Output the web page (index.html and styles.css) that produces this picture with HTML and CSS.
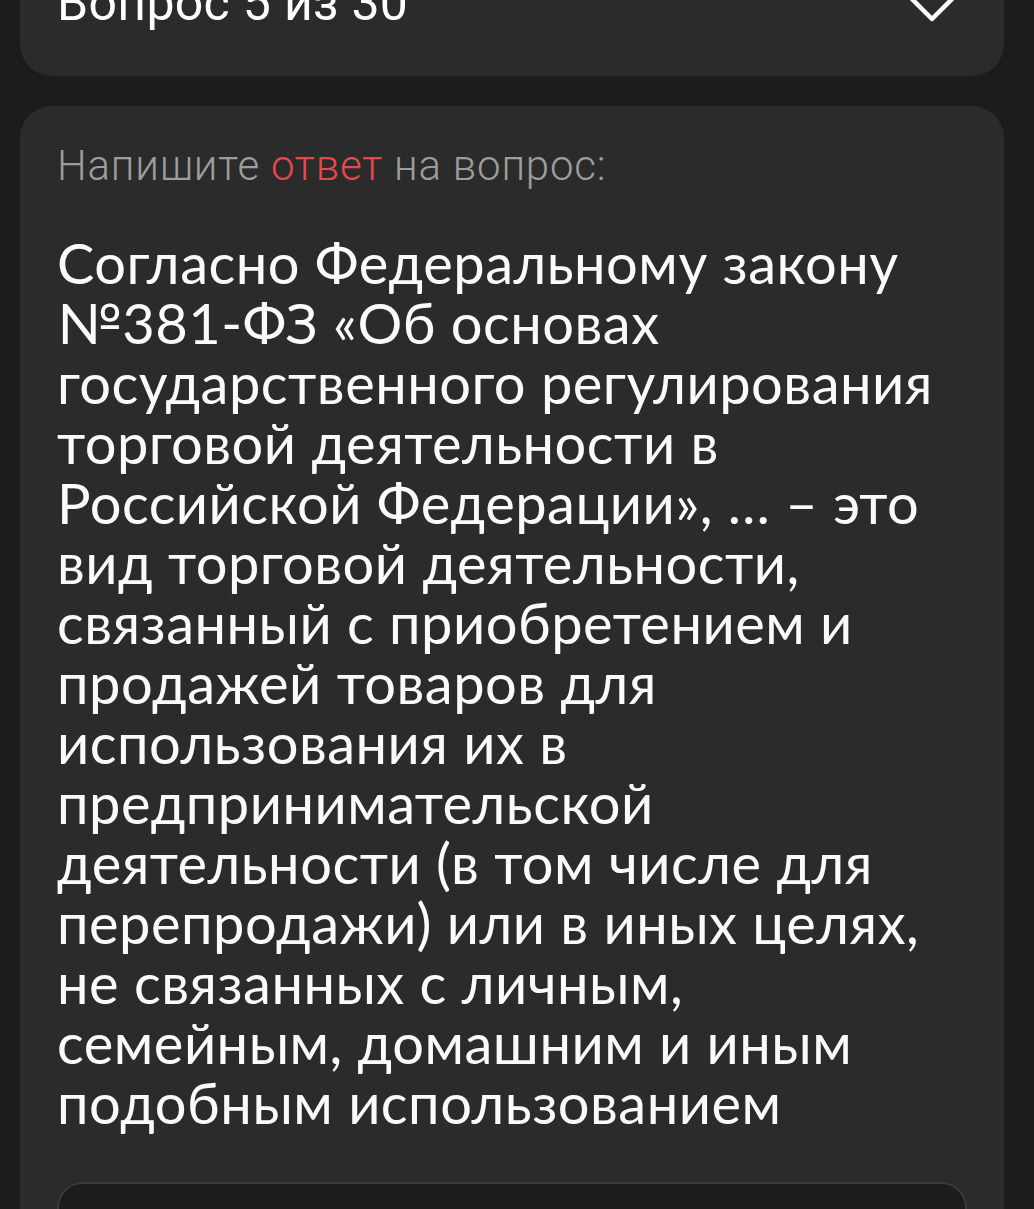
FILE: index.html
```html
<!DOCTYPE html>
<html lang="ru">
<head>
    <meta charset="UTF-8">
    <meta name="viewport" content="width=device-width, initial-scale=1.0">
    <title>Вопрос 5 из 30</title>
    <link rel="stylesheet" href="styles.css">
</head>
<body>
<div class="stranitsa">
    <!-- Шапка с номером вопроса -->
    <div class="kartochka shapka">
        <span class="nomer">Вопрос 5 из 30</span>
        <svg class="strelka" width="52" height="30" viewBox="0 0 52 30">
            <polyline points="3,3 26,26 49,3" fill="none" stroke="#fff" stroke-width="4.5" stroke-linecap="round" stroke-linejoin="round"/>
        </svg>
    </div>

    <!-- Вопрос -->
    <div class="kartochka vopros">
        <p class="podskazka">Напишите <span class="krasnyi">ответ</span> на вопрос:</p>
        <p class="tekst">
            Согласно Федеральному закону<br>
            №381-ФЗ «Об основах<br>
            государственного регулирования<br>
            торговой деятельности в<br>
            Российской Федерации», … – это<br>
            вид торговой деятельности,<br>
            связанный с приобретением и<br>
            продажей товаров для<br>
            использования их в<br>
            предпринимательской<br>
            деятельности (в том числе для<br>
            перепродажи) или в иных целях,<br>
            не связанных с личным,<br>
            семейным, домашним и иным<br>
            подобным использованием
        </p>
        <div class="pole-otveta"></div>
    </div>
</div>
</body>
</html>
```

FILE: styles.css
```css
body {
    margin: 0;
    background-color: #1c1c1c;
    font-family: Roboto, "Noto Sans", sans-serif;
    color: #fff;
}

.stranitsa {
    margin-top: -70px;
    padding: 0 30px 0 20px;
    display: flex;
    flex-direction: column;
    gap: 30px;
}

.kartochka {
    background-color: #2b2b2b;
    border-radius: 32px;
}

.shapka {
    display: flex;
    align-items: center;
    justify-content: space-between;
    padding: 44px 46px 44px 37px;
}

.nomer {
    font-size: 50px;
    line-height: 58px;
    letter-spacing: 0.3px;
}

.strelka {
    display: block;
    margin-top: 10px;
}

.vopros {
    padding: 36px 37px 0 37px;
}

.podskazka {
    margin: 0;
    font-size: 42px;
    line-height: 48px;
    font-weight: 300;
    letter-spacing: 0.8px;
    color: #9d9d9d;
}

.krasnyi {
    color: #e5484d;
}

.tekst {
    margin: 43px 0 49px;
    font-family: Lato, "Noto Sans", sans-serif;
    font-size: 56px;
    line-height: 60px;
    letter-spacing: 0.5px;
    color: #fafafa;
    white-space: nowrap;
}

.pole-otveta {
    height: 120px;
    background-color: #1c1c1c;
    border: 2px solid #3a3a3a;
    border-bottom: none;
    border-radius: 26px 26px 0 0;
}
```
